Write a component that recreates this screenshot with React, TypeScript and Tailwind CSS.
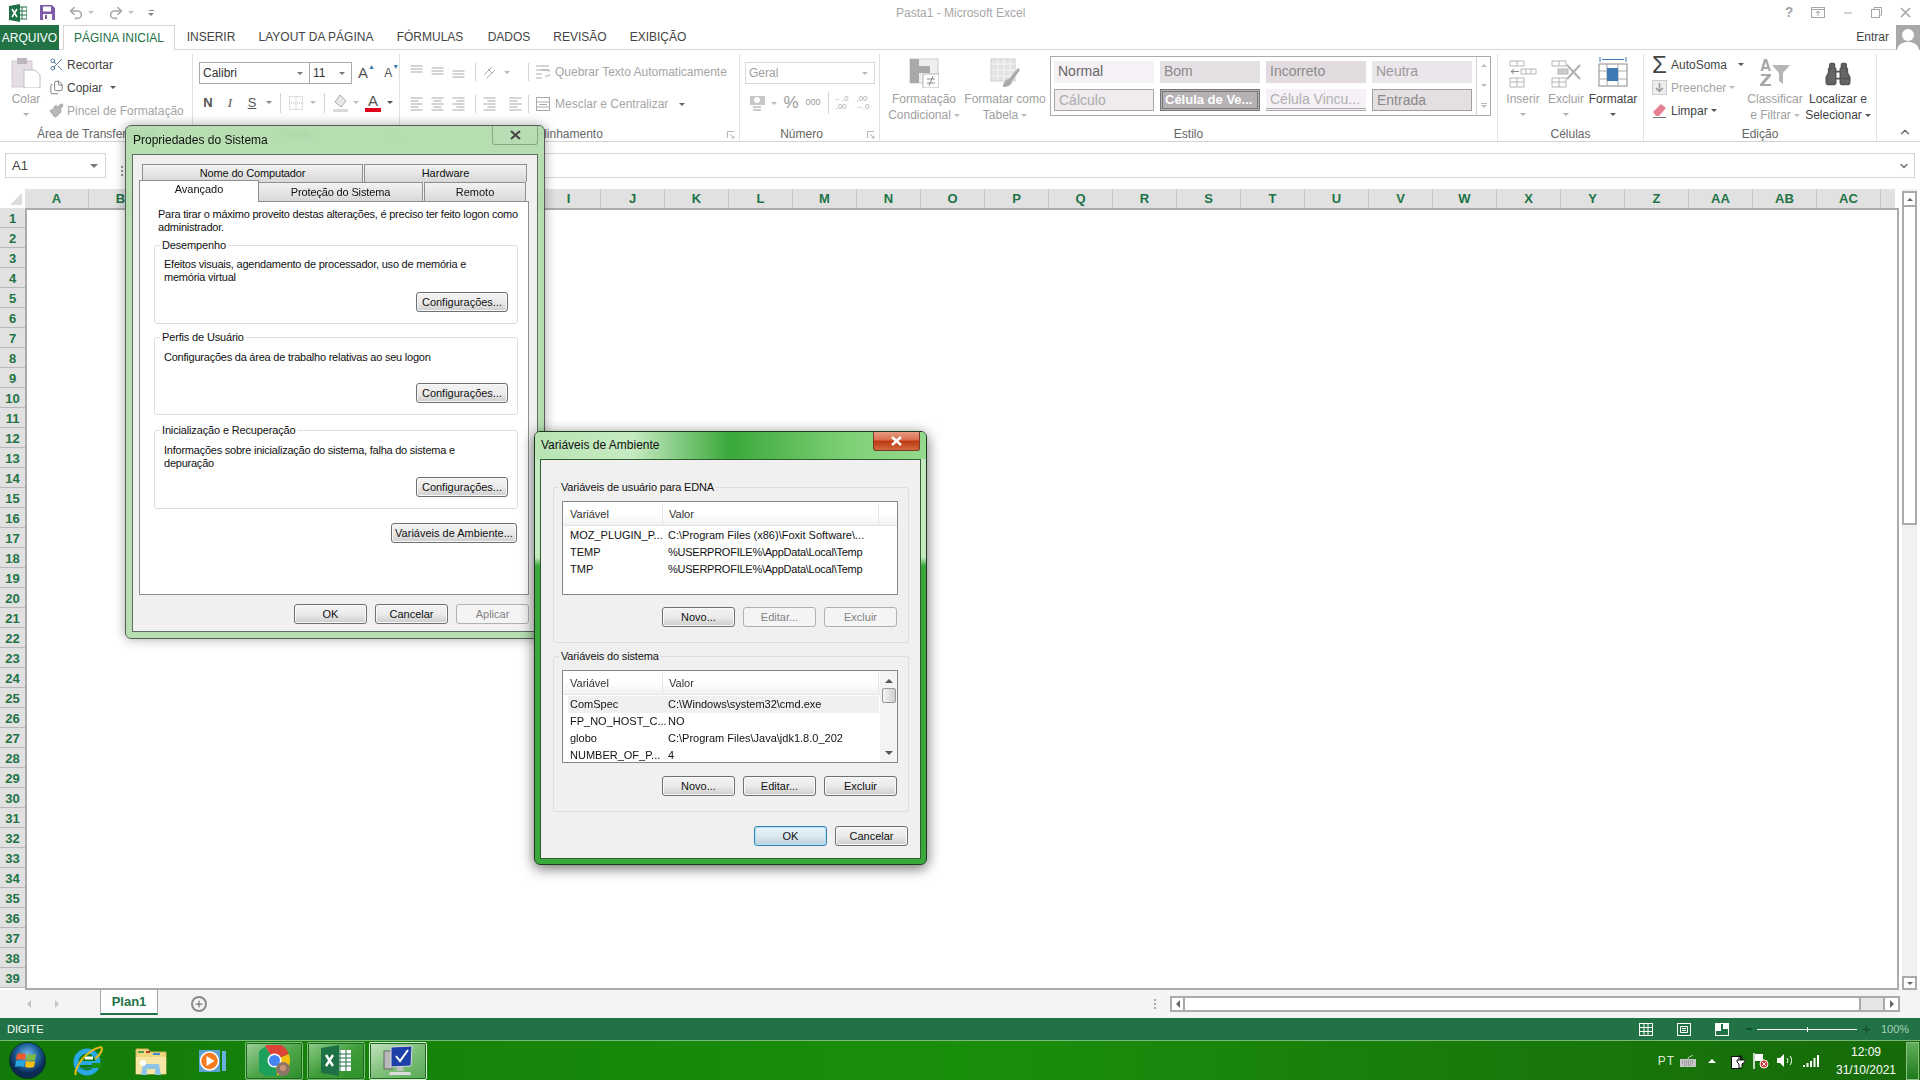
import React from "react";
import { Scissors, Files, Paintbrush, Undo2, Redo2, Binoculars, ChevronUp, ChevronDown, Plus, Minus } from "lucide-react";

const Caret = ({ c = "border-t-[#8a8a8a]", className = "" }: { c?: string; className?: string }) => (
  <span className={"inline-block w-0 h-0 border-x-[3px] border-t-[3px] border-x-transparent " + c + " " + className} />
);

const Sep = ({ className = "h-[24px]" }: { className?: string }) => <span className={"inline-block w-px bg-[#d4d4d4] " + className} />;

const Lines = ({ kind = "left", c = "#a9a9a9" }: { kind?: string; c?: string }) => {
  const sets: Record<string, number[][]> = {
    top: [[1, 1, 13], [1, 4, 13], [1, 7, 13]],
    mid: [[1, 3, 13], [1, 6, 13], [1, 9, 13]],
    bot: [[1, 6, 13], [1, 9, 13], [1, 12, 13]],
    left: [[1, 1, 13], [1, 4, 9], [1, 7, 13], [1, 10, 9], [1, 13, 13]],
    center: [[1, 1, 13], [3, 4, 11], [1, 7, 13], [3, 10, 11], [1, 13, 13]],
    right: [[1, 1, 13], [5, 4, 13], [1, 7, 13], [5, 10, 13], [1, 13, 13]],
  };
  return (
    <svg width="15" height="14" viewBox="0 0 14 14">
      {sets[kind].map((l, i) => (
        <line key={i} x1={l[0]} x2={l[2]} y1={l[1]} y2={l[1]} stroke={c} strokeWidth="1" />
      ))}
    </svg>
  );
};

const Large = ({ icon, lines, cls, caret, dark }: { icon: React.ReactNode; lines: React.ReactNode[]; cls: string; caret?: boolean; dark?: boolean }) => (
  <div className={"flex flex-col items-center shrink-0 " + cls}>
    <div className="h-[37px] pb-[3px] flex items-end justify-center">{icon}</div>
    {lines.map((l, i) => (
      <div key={i} className={"h-[16px] leading-[16px] whitespace-nowrap flex items-center gap-[3px] text-[12px] " + (dark ? "text-[#444]" : "text-[#a0a0a0]")}>
        {l}
      </div>
    ))}
    {caret && <Caret c={dark ? "border-t-[#555]" : "border-t-[#b0b0b0]"} className="mt-[6px]" />}
  </div>
);

const Small = ({ icon, text, dark, caret, cls = "" }: { icon: React.ReactNode; text: string; dark?: boolean; caret?: React.ReactNode; cls?: string }) => (
  <div className={"h-[23px] flex items-center whitespace-nowrap text-[12px] " + (dark ? "text-[#444] " : "text-[#a6a6a6] ") + cls}>
    {icon}
    <span>{text}</span>
    {caret}
  </div>
);

const Launcher = () => (
  <svg className="absolute right-[4px] top-[8px]" width="8" height="8" viewBox="0 0 8 8" fill="none" stroke="#b5b5b5">
    <path d="M.5 7V.5H7M3 3l4 4M7 4.5V7H4.5" />
  </svg>
);

const Group = ({ cls, label, launcher, labelCls = "", children }: { cls: string; label?: string; launcher?: boolean; labelCls?: string; children: React.ReactNode }) => (
  <div className={"flex flex-col shrink-0 h-full " + cls}>
    <div className="flex-1 min-h-0">{children}</div>
    <div className={"relative h-[18px] leading-[22px] text-center text-[12px] text-[#666] " + labelCls}>
      {label}
      {launcher && <Launcher />}
    </div>
  </div>
);

const IconCell = ({ w, children }: { w: string; children: React.ReactNode }) => <span className={"shrink-0 flex items-center justify-center " + w}>{children}</span>;

const Combo = ({ text, cls, dis }: { text: string; cls: string; dis?: boolean }) => (
  <div className={"h-[22px] flex items-center justify-between px-[3px] border text-[12px] shrink-0 " + (dis ? "border-[#d9d9d9] text-[#a0a0a0] " : "border-[#ababab] text-[#333] ") + cls}>
    <span>{text}</span>
    <Caret className="mr-[3px]" c={dis ? "border-t-[#bbb]" : "border-t-[#777]"} />
  </div>
);

const Ribbon = () => {
  const styleItem = "w-[100px] h-[22px] leading-[20px] px-[4px] text-[14px] whitespace-nowrap overflow-hidden ";
  return (
    <div className="h-[92px] shrink-0 flex border-b border-[#d4d4d4] bg-white text-[#444] pt-[4px]">
      <Group cls="w-[193px] border-r border-[#e1e1e1]" label="Área de Transferência" launcher>
        <div className="flex pl-[11px]">
          <Large
            cls="w-[30px]"
            lines={["Colar"]}
            caret
            icon={
              <svg width="30" height="30" viewBox="0 0 30 30">
                <rect x="1" y="3" width="20" height="26" fill="#e4dee4" stroke="#cfc8cf" />
                <rect x="6" y="0" width="10" height="6" fill="#bdb6bd" />
                <path d="M13 12h11l5 5v13H13z" fill="#fff" stroke="#bdbdbd" />
              </svg>
            }
          />
          <div className="ml-[8px] -mt-[1px] flex flex-col">
            <Small dark text="Recortar" icon={<Scissors size={15} className="mr-[3px] text-[#4a6f9c]" strokeWidth={1.5} />} />
            <Small dark text="Copiar" icon={<Files size={15} className="mr-[3px] text-[#666]" strokeWidth={1.3} />} caret={<Caret className="ml-[8px]" c="border-t-[#555]" />} />
            <Small text="Pincel de Formatação" icon={<Paintbrush size={15} className="mr-[3px] text-[#aaa]" fill="#bbb" />} />
          </div>
        </div>
      </Group>

      <Group cls="w-[207px] border-r border-[#e1e1e1]" label="Fonte" launcher>
        <div className="pt-[8px] pl-[6px]">
          <div className="flex items-center">
            <Combo text="Calibri" cls="w-[111px] -mr-px" />
            <Combo text="11" cls="w-[43px]" />
            <span className="w-[30px] pl-[6px] text-[15px] text-[#555] relative">A<span className="absolute left-[16px] top-0 text-[7px] text-[#3d7ab5]">▲</span></span>
            <span className="w-[20px] pl-[4px] text-[12px] text-[#555] relative">A<span className="absolute left-[12px] -top-[2px] text-[7px] text-[#3d7ab5]">▼</span></span>
          </div>
          <div className="flex items-center h-[22px] mt-[7px] -ml-[2px]">
            <IconCell w="w-[22px]"><b className="text-[13px] text-[#555]">N</b></IconCell>
            <IconCell w="w-[22px]"><i className="text-[13px] text-[#555] [font-family:'Liberation_Serif',serif]">I</i></IconCell>
            <IconCell w="w-[22px]"><b className="text-[13px] text-[#555] underline font-normal">S</b></IconCell>
            <IconCell w="w-[12px]"><Caret /></IconCell>
            <IconCell w="w-[10px]"><Sep className="h-[20px]" /></IconCell>
            <IconCell w="w-[22px]">
              <svg width="14" height="14" viewBox="0 0 14 14" fill="none" stroke="#bdbdbd" strokeDasharray="1 1"><rect x=".5" y=".5" width="13" height="13" /><path d="M7 0v14M0 7h14" /></svg>
            </IconCell>
            <IconCell w="w-[12px]"><Caret c="border-t-[#bbb]" /></IconCell>
            <IconCell w="w-[10px]"><Sep className="h-[20px]" /></IconCell>
            <IconCell w="w-[24px]">
              <svg width="18" height="18" viewBox="0 0 18 18"><path d="M8 1l6 6-5 6-6-5z" fill="#e8e8e8" stroke="#aaa" /><rect x="1" y="15" width="15" height="3" fill="#d9d9d9" /></svg>
            </IconCell>
            <IconCell w="w-[6px]"><Caret c="border-t-[#bbb]" /></IconCell>
            <IconCell w="w-[28px]">
              <span className="flex flex-col items-center text-[15px] leading-[15px] text-[#555]">A<span className="block w-[16px] h-[4px] bg-[#e2001a]" /></span>
            </IconCell>
            <IconCell w="w-[6px]"><Caret c="border-t-[#555]" /></IconCell>
          </div>
        </div>
      </Group>

      <Group cls="w-[340px] border-r border-[#e1e1e1]" label="Alinhamento" launcher>
        <div className="pt-[6px] pl-[6px] text-[#a6a6a6] text-[12px]">
          <div className="flex items-center h-[24px]">
            <IconCell w="w-[21px]"><Lines kind="top" /></IconCell>
            <IconCell w="w-[21px]"><Lines kind="mid" /></IconCell>
            <IconCell w="w-[21px]"><Lines kind="bot" /></IconCell>
            <span className="w-[6px]" />
            <Sep className="h-[18px]" />
            <IconCell w="w-[28px]">
              <svg width="16" height="15" viewBox="0 0 16 15" fill="none" stroke="#aaa"><path d="M2 10L10 2M5 13L13 5" /><path d="M6 4l4 4" /></svg>
            </IconCell>
            <Caret c="border-t-[#bbb]" />
            <span className="w-[18px]" />
            <Sep className="h-[18px]" />
            <svg className="ml-[7px] mr-[5px]" width="14" height="14" viewBox="0 0 14 14" fill="none" stroke="#aaa"><path d="M0 1h13M0 5h13M0 9h6M0 13h6M9 11h2.5a1.5 1.5 0 000-6H5" /></svg>
            <span>Quebrar Texto Automaticamente</span>
          </div>
          <div className="flex items-center h-[24px] mt-[8px]">
            <IconCell w="w-[21px]"><Lines kind="left" /></IconCell>
            <IconCell w="w-[21px]"><Lines kind="center" /></IconCell>
            <IconCell w="w-[21px]"><Lines kind="right" /></IconCell>
            <span className="w-[6px]" />
            <Sep className="h-[18px]" />
            <IconCell w="w-[26px]"><Lines kind="right" /></IconCell>
            <IconCell w="w-[26px]"><Lines kind="left" /></IconCell>
            <Sep className="h-[18px]" />
            <svg className="ml-[7px] mr-[5px]" width="14" height="14" viewBox="0 0 14 14" fill="none" stroke="#aaa"><rect x=".5" y=".5" width="13" height="13" /><path d="M0 5h14M0 10h14M3 7.5h8" /></svg>
            <span>Mesclar e Centralizar</span>
            <Caret className="ml-[11px]" c="border-t-[#666]" />
          </div>
        </div>
      </Group>

      <Group cls="w-[140px] border-r border-[#e1e1e1]" label="Número" launcher labelCls="pr-[16px]">
        <div className="pt-[8px] pl-[5px]">
          <Combo dis text="Geral" cls="w-[130px]" />
          <div className="flex items-center h-[24px] mt-[7px] text-[#aaa]">
            <IconCell w="w-[26px]">
              <svg width="18" height="18" viewBox="0 0 18 18"><rect x="1" y="2" width="15" height="9" fill="#c6c6c6" /><circle cx="8" cy="6" r="3" fill="#fff" /><path d="M4 13h8M4 16h8" stroke="#ccc" strokeWidth="2" /></svg>
            </IconCell>
            <Caret c="border-t-[#bbb]" />
            <span className="w-[3px]" />
            <span className="text-[17px] w-[22px] text-center text-[#999]">%</span>
            <span className="text-[9px] w-[22px] text-center text-[#999]">000</span>
            <span className="w-[4px]" />
            <Sep className="h-[22px]" />
            <span className="w-[24px] text-[8px] leading-[8px] text-center">←,0<br />,00</span>
            <span className="w-[18px] text-[8px] leading-[8px] text-center">,00<br />→,0</span>
          </div>
        </div>
      </Group>

      <Group cls="w-[618px] border-r border-[#e1e1e1]" label="Estilo">
        <div className="flex pl-[2px]">
          <Large
            cls="w-[84px]"
            lines={["Formatação", <>Condicional <Caret c="border-t-[#bbb]" /></>]}
            icon={
              <svg width="30" height="30" viewBox="0 0 30 30">
                <rect x="1" y="1" width="28" height="24" fill="#eee" stroke="#ccc" />
                <path d="M1 1h9v24H1zM10 8h11v7H10z" fill="#a9a9a9" />
                <rect x="14" y="16" width="16" height="14" fill="#fff" stroke="#b5b5b5" />
                <path d="M18 21h8M18 25h8M24 18l-4 10" stroke="#888" fill="none" />
              </svg>
            }
          />
          <Large
            cls="w-[78px]"
            lines={["Formatar como", <>Tabela <Caret c="border-t-[#bbb]" /></>]}
            icon={
              <svg width="32" height="30" viewBox="0 0 32 30">
                <rect x="2" y="1" width="24" height="22" fill="#e3e3e3" stroke="#ccc" />
                <path d="M2 6h24M2 12h24M2 18h24M9 1v22M15 1v22M21 1v22" stroke="#f5f5f5" />
                <path d="M14 29c0-5 3-8 6-8l9-11 2 2-8 11c0 4-4 6-9 6z" fill="#aaa" />
              </svg>
            }
          />
          <div className="ml-[6px] mt-[2px] w-[441px] h-[60px] border border-[#ababab] flex">
            <div className="flex-1 pl-[3px] pt-[4px] grid grid-cols-[100px_100px_100px_100px] gap-x-[6px] gap-y-[6px] content-start">
              <div className={styleItem + "bg-[#f5f1f6] text-[#666]"}>Normal</div>
              <div className={styleItem + "bg-[#e5e0e4] text-[#8a8a8a]"}>Bom</div>
              <div className={styleItem + "bg-[#e2dce0] text-[#8a8a8a]"}>Incorreto</div>
              <div className={styleItem + "bg-[#ebe6eb] text-[#9a9a9a]"}>Neutra</div>
              <div className={styleItem + "bg-[#efebef] border border-[#a8a8a8] text-[#aaa]"}>Cálculo</div>
              <div className="w-[100px] h-[22px] leading-[16px] px-[2px] text-[13px] whitespace-nowrap overflow-hidden bg-[#b5b1b5] border-[3px] border-double border-[#777] text-white font-bold">Célula de Ve...</div>
              <div className={styleItem + "bg-[#f5f1f6] border-b-[3px] border-double border-[#aaa] text-[#b0b0b0]"}>Célula Vincu...</div>
              <div className={styleItem + "bg-[#e3dfe3] border border-[#a0a0a0] text-[#8a8a8a]"}>Entrada</div>
            </div>
            <div className="w-[14px] border-l border-[#d4d4d4] flex flex-col items-center justify-between py-[7px]">
              <Caret className="rotate-180" c="border-t-[#bbb]" />
              <Caret c="border-t-[#bbb]" />
              <span className="flex flex-col items-center gap-[1px]"><span className="w-[6px] h-px bg-[#bbb]" /><Caret c="border-t-[#bbb]" /></span>
            </div>
          </div>
        </div>
      </Group>

      <Group cls="w-[146px] border-r border-[#e1e1e1]" label="Células">
        <div className="flex pl-[3px]">
          <Large
            cls="w-[44px]"
            lines={["Inserir"]}
            caret
            icon={
              <svg width="28" height="28" viewBox="0 0 28 28" fill="none" stroke="#b5b5b5">
                <path d="M1 1h14v5H1zM8 1v5M1 18h14v9H1zM1 22h14M8 18v9M12 9h15v5H12zM17 9v5M22 9v5" />
                <path d="M10 11.5H2M5 9l-3 2.5L5 14" stroke="#888" />
              </svg>
            }
          />
          <Large
            cls="w-[42px]"
            lines={["Excluir"]}
            caret
            icon={
              <svg width="30" height="28" viewBox="0 0 30 28" fill="none" stroke="#b5b5b5">
                <path d="M1 1h14v5H1zM8 1v5M1 18h14v9H1zM1 22h14M8 18v9" />
                <rect x="7" y="9" width="10" height="5" fill="#ccc" />
                <path d="M16 5l13 14M29 5L16 19" stroke="#b0b0b0" strokeWidth="2" />
              </svg>
            }
          />
          <Large
            dark
            cls="w-[52px]"
            lines={["Formatar"]}
            caret
            icon={
              <svg width="30" height="32" viewBox="0 0 30 32" fill="none">
                <path d="M2 1v5M28 1v5M4 3.5h22" stroke="#3d7ab5" />
                <rect x="1" y="8" width="28" height="22" fill="#fff" stroke="#888" />
                <path d="M1 15h28M1 23h28M9 8v22M20 8v22" stroke="#aaa" />
                <rect x="9" y="12" width="11" height="13" fill="#3d7ab5" />
              </svg>
            }
          />
        </div>
      </Group>

      <Group cls="w-[233px] border-r border-[#e1e1e1]" label="Edição">
        <div className="flex pl-[8px]">
          <div className="w-[95px] shrink-0 -mt-[1px]">
            <Small dark text="AutoSoma" icon={<span className="w-[19px] text-[24px] leading-[18px] text-[#444]">Σ</span>} caret={<Caret className="ml-[11px]" c="border-t-[#555]" />} />
            <Small
              text="Preencher"
              icon={
                <svg className="mr-[4px]" width="15" height="15" viewBox="0 0 15 15"><rect x=".5" y=".5" width="14" height="14" fill="#eee" stroke="#ccc" /><path d="M7.5 3v8M4 8l3.5 3.5L11 8" stroke="#999" fill="none" strokeWidth="1.5" /></svg>
              }
              caret={<Caret className="ml-[3px]" c="border-t-[#bbb]" />}
            />
            <Small
              dark
              text="Limpar"
              icon={
                <svg className="mr-[4px]" width="15" height="15" viewBox="0 0 15 15"><path d="M1 9l8-8 5 4-7 8H4z" fill="#e8808f" /><path d="M1 14.5h13" stroke="#777" /></svg>
              }
              caret={<Caret className="ml-[3px]" c="border-t-[#555]" />}
            />
          </div>
          <Large
            cls="w-[56px]"
            lines={["Classificar", <>e Filtrar <Caret c="border-t-[#bbb]" /></>]}
            icon={
              <svg width="32" height="30" viewBox="0 0 32 30" fill="#a8a8a8">
                <path d="M5 1h3l4 12H9.6L9 11H4.5L4 13H1.5zM6.8 4L5.2 9h3z" />
                <path d="M2 16h10v2l-7 8h7v2H1v-2l7-8H2z" />
                <path d="M13 7h18l-7 8v11l-4-3v-8z" fill="#b5b5b5" />
              </svg>
            }
          />
          <Large
            dark
            cls="w-[70px]"
            lines={["Localizar e", <>Selecionar <Caret c="border-t-[#555]" /></>]}
            icon={<Binoculars size={28} className="text-[#555]" fill="#666" strokeWidth={1.4} />}
          />
        </div>
      </Group>

      <div className="flex-1 relative">
        <ChevronUp size={14} className="absolute right-[8px] bottom-[2px] text-[#666]" strokeWidth={2} />
      </div>
    </div>
  );
};

const TitleBar = () => (
  <div className="h-[25px] shrink-0 flex items-center bg-white relative">
    <svg className="ml-[9px]" width="18" height="18" viewBox="0 0 18 18">
      <rect x="8" y="3" width="10" height="12" fill="#fff" stroke="#1e7145" />
      <path d="M8 7h10M8 11h10M13 3v12" stroke="#1e7145" />
      <path d="M0 2l11-2v18L0 16z" fill="#1e7145" />
      <path d="M3 5l5 8M8 5l-5 8" stroke="#fff" strokeWidth="1.6" />
    </svg>
    <svg className="ml-[13px]" width="15" height="15" viewBox="0 0 15 15">
      <path d="M0 0h12l3 3v12H0z" fill="#7f5aa5" />
      <rect x="3" y="1.5" width="8" height="5" fill="#fff" />
      <rect x="3" y="9" width="9" height="6" fill="#fff" />
      <rect x="5" y="10" width="2" height="4" fill="#7f5aa5" />
    </svg>
    <Undo2 size={16} className="ml-[13px] text-[#a9a9a9]" strokeWidth={2.4} />
    <Caret className="ml-[4px]" c="border-t-[#c4c4c4]" />
    <Redo2 size={16} className="ml-[14px] text-[#a9a9a9]" strokeWidth={2.4} />
    <Caret className="ml-[4px]" c="border-t-[#c4c4c4]" />
    <span className="ml-[14px] flex flex-col items-center gap-[2px]"><span className="w-[5px] h-px bg-[#888]" /><Caret c="border-t-[#888]" /></span>
    <div className="absolute left-[896px] w-[126px] text-center text-[12px] text-[#a6a6a6] whitespace-nowrap">Pasta1 - Microsoft Excel</div>
    <div className="ml-auto flex items-center text-[#a6a6a6]">
      <span className="w-[14px] text-center text-[14px] font-bold mr-[15px]">?</span>
      <svg className="mr-[17px]" width="14" height="11" viewBox="0 0 14 11" fill="none" stroke="#a6a6a6"><rect x=".5" y=".5" width="13" height="10" /><path d="M1 2.5h12M7 9V4M5 6l2-2 2 2" /></svg>
      <Minus size={12} className="mr-[17px]" strokeWidth={2} />
      <svg className="mr-[18px]" width="11" height="11" viewBox="0 0 11 11" fill="none" stroke="#a6a6a6"><rect x=".5" y="2.5" width="8" height="8" /><path d="M3 2V.5h7.5V8H9" /></svg>
      <svg className="mr-[9px]" width="11" height="11" viewBox="0 0 11 11" stroke="#a6a6a6" strokeWidth="1.6"><path d="M1 1l9 9M10 1l-9 9" /></svg>
    </div>
  </div>
);

const Tabs = () => (
  <div className="h-[25px] shrink-0 flex items-stretch border-b border-[#d4d4d4] text-[12px] text-[#444] bg-white relative">
    <div className="w-[59px] bg-[#217346] text-white flex items-center justify-center -mb-px">ARQUIVO</div>
    <div className="ml-[4px] w-[112px] border border-b-0 border-[#d4d4d4] bg-white -mb-px flex items-center justify-center text-[#217346]">PÁGINA INICIAL</div>
    <div className="w-[72px] flex items-center justify-center">INSERIR</div>
    <div className="w-[138px] flex items-center justify-center">LAYOUT DA PÁGINA</div>
    <div className="w-[90px] flex items-center justify-center">FÓRMULAS</div>
    <div className="w-[68px] flex items-center justify-center">DADOS</div>
    <div className="w-[74px] flex items-center justify-center">REVISÃO</div>
    <div className="w-[82px] flex items-center justify-center">EXIBIÇÃO</div>
    <div className="ml-auto flex items-center">
      <span className="mr-[7px]">Entrar</span>
      <span className="w-[24px] h-[25px] bg-[#a9a9a9] relative overflow-hidden flex justify-center">
        <svg width="24" height="25" viewBox="0 0 24 25"><circle cx="12" cy="10" r="6" fill="#fff" /><path d="M1 25c1-6 6-8 11-8s10 2 11 8z" fill="#fff" /></svg>
      </span>
    </div>
  </div>
);

const FormulaBar = () => (
  <div className="h-[47px] shrink-0 pt-[11px] flex bg-white text-[12px]">
    <div className="ml-[5px] w-[101px] h-[25px] border border-[#d4d4d4] flex items-center justify-between pl-[6px] pr-[7px] text-[#444]">
      <span className="text-[13px]">A1</span>
      <Caret className="border-x-[4px] border-t-[4px]" c="border-t-[#777]" />
    </div>
    <div className="ml-[10px] w-[12px] flex flex-col items-center justify-center gap-[2px]">
      <span className="w-[2px] h-[2px] bg-[#999]" /><span className="w-[2px] h-[2px] bg-[#999]" /><span className="w-[2px] h-[2px] bg-[#999]" />
    </div>
    <div className="flex-1 mr-[5px] h-[25px] border border-[#d4d4d4] flex items-center justify-end pr-[4px]">
      <ChevronDown size={12} strokeWidth={3} className="text-[#777]" />
    </div>
  </div>
);

const COLS = "A B C D E F G H I J K L M N O P Q R S T U V W X Y Z AA AB AC".split(" ");
const ROWS = Array.from({ length: 39 }, (_, i) => i + 1);

const Sheet = () => (
  <div className="h-[801px] shrink-0 flex bg-white">
    <div className="w-[1899px] flex flex-col">
      <div className="h-[19px] flex shrink-0">
        <div className="w-[25px] bg-white relative overflow-hidden">
          <svg className="absolute right-[3px] bottom-[3px]" width="12" height="12"><path d="M12 0v12H0z" fill="#dcdcdc" /></svg>
        </div>
        {COLS.map((c) => (
          <div key={c} className="w-[64px] bg-[#e1e1e1] border-r border-[#c6c6c6] flex items-center justify-center text-[13px] font-bold text-[#217346]">{c}</div>
        ))}
        <div className="w-[14px] bg-[#e1e1e1]" />
      </div>
      <div className="flex flex-1 min-h-0">
        <div className="w-[25px] shrink-0 flex flex-col">
          {ROWS.map((r) => (
            <div key={r} className="h-[20px] shrink-0 pt-[2px] bg-[#e1e1e1] border-b border-[#b8b8b8] flex items-center justify-center text-[13px] font-bold text-[#217346]">{r}</div>
          ))}
        </div>
        <div className="flex-1 h-[782px] border-2 border-[#ababab] bg-white" />
      </div>
    </div>
    <div className="ml-[3px] w-[15px] flex flex-col bg-[#f1f1f1] h-[801px] pt-[2px]">
      <div className="h-[16px] border-2 border-[#ababab] bg-white flex items-center justify-center">
        <Caret className="rotate-180" c="border-t-[#666]" />
      </div>
      <div className="h-[318px] border-2 border-t-0 border-[#ababab] bg-white" />
      <div className="flex-1" />
      <div className="h-[14px] border-2 border-[#ababab] bg-white flex items-center justify-center">
        <Caret c="border-t-[#666]" />
      </div>
    </div>
  </div>
);

const SheetBar = () => (
  <div className="h-[28px] shrink-0 flex items-center bg-[#f4f4f4] relative">
    <span className="ml-[27px] w-0 h-0 border-y-[4px] border-r-[4px] border-y-transparent border-r-[#c4c4c4]" />
    <span className="ml-[24px] w-0 h-0 border-y-[4px] border-l-[4px] border-y-transparent border-l-[#c4c4c4]" />
    <div className="ml-[41px] w-[58px] h-[25px] -mt-[3px] border-x border-[#ababab] bg-white border-b-2 border-b-[#217346] flex items-center justify-center text-[13px] font-bold text-[#217346]">Plan1</div>
    <span className="ml-[33px] w-[16px] h-[16px] rounded-full border-2 border-[#8a8a8a] flex items-center justify-center text-[#777]">
      <Plus size={10} strokeWidth={3} />
    </span>
    <div className="ml-[944px] flex flex-col gap-[2px] w-[8px] items-center">
      <span className="w-[2px] h-[2px] bg-[#aaa]" /><span className="w-[2px] h-[2px] bg-[#aaa]" /><span className="w-[2px] h-[2px] bg-[#aaa]" />
    </div>
    <div className="ml-[11px] w-[730px] h-[16px] flex border-2 border-[#ababab] bg-white">
      <div className="w-[13px] border-r-2 border-[#ababab] flex items-center justify-center">
        <span className="w-0 h-0 border-y-[4px] border-r-[4px] border-y-transparent border-r-[#666]" />
      </div>
      <div className="w-[676px] bg-white border-r-2 border-[#ababab]" />
      <div className="flex-1 bg-[#e6e6e6] border-r-2 border-[#ababab]" />
      <div className="w-[13px] flex items-center justify-center">
        <span className="w-0 h-0 border-y-[4px] border-l-[4px] border-y-transparent border-l-[#666]" />
      </div>
    </div>
  </div>
);

const StatusBar = () => (
  <div className="h-[22px] shrink-0 bg-[#217346] flex items-center text-[11px] text-white">
    <span className="ml-[7px]">DIGITE</span>
    <div className="ml-auto flex items-center">
      <svg width="14" height="13" viewBox="0 0 14 13" fill="none" stroke="#fff"><rect x=".5" y=".5" width="13" height="12" /><path d="M5 0v13M9 0v13M0 4.5h14M0 8.5h14" /></svg>
      <svg className="ml-[24px]" width="14" height="13" viewBox="0 0 14 13" fill="none" stroke="#fff"><rect x=".5" y=".5" width="13" height="12" /><path d="M3.5 3.5h7v6h-7zM5 5.5h4M5 7.5h4" /></svg>
      <svg className="ml-[24px]" width="14" height="13" viewBox="0 0 14 13"><rect x=".5" y=".5" width="13" height="12" fill="none" stroke="#fff" /><path d="M0 0h6v8H0zM8 0h6v6H8z" fill="#fff" /></svg>
      <span className="ml-[17px] w-[6px] h-[2px] bg-[#14502e]" />
      <span className="ml-[5px] w-[100px] h-px bg-white relative"><span className="absolute left-1/2 -top-[2px] w-px h-[5px] bg-white" /></span>
      <Plus size={11} strokeWidth={3} className="ml-[4px] text-[#14502e]" />
      <span className="ml-[9px] mr-[9px] w-[30px] text-[#a8cdb6] text-[11px]">100%</span>
    </div>
  </div>
);

const TaskBtn = ({ cls, children }: { cls: string; children: React.ReactNode }) => (
  <div className={"w-[58px] h-[38px] rounded-[2px] border border-[#7fbd7f] flex items-center justify-center shrink-0 shadow-[inset_0_0_0_1px_#1c6a1c] " + cls}>{children}</div>
);

const Taskbar = () => (
  <div className="flex-1 border-t border-[#78b878] bg-gradient-to-r from-[#127a08] via-[#1a8f0c] to-[#166a08] flex items-center text-white relative">
    <svg className="ml-[9px] shrink-0" width="37" height="37" viewBox="0 0 37 37">
      <defs>
        <radialGradient id="orb" cx="50%" cy="35%"><stop offset="0" stopColor="#7ec1ee" /><stop offset="0.6" stopColor="#20649f" /><stop offset="1" stopColor="#0b2b55" /></radialGradient>
      </defs>
      <circle cx="18.5" cy="18.5" r="18" fill="url(#orb)" stroke="#0a3a22" />
      <path d="M8 12c3-1 6-1 9 0l-1 6c-3-1-6-1-9 0z" fill="#f15b2a" />
      <path d="M18 12c3 1 6 1 9 0l-1 6c-3 1-6 1-9 0z" fill="#7cbb42" />
      <path d="M7 19c3-1 6-1 9 0l-1 6c-3-1-6-1-9 0z" fill="#2aa5e0" />
      <path d="M17 19c3 1 6 1 9 0l-1 6c-3 1-6 1-9 0z" fill="#fbc00e" />
    </svg>
    <svg className="ml-[27px] shrink-0" width="30" height="30" viewBox="0 0 30 30">
      <circle cx="14" cy="16" r="11" fill="none" stroke="#29a7e6" strokeWidth="5" />
      <path d="M6 17h17" stroke="#29a7e6" strokeWidth="4" />
      <path d="M12 12h8" stroke="#fff" strokeWidth="3" />
      <path d="M3 29C0 24 12 4 28 1c3 2-2 9-6 12" fill="none" stroke="#e9b818" strokeWidth="2" />
      <path d="M22 21l-16 2" stroke="#18a" strokeWidth="1" />
      <rect x="19" y="17" width="9" height="5" fill="#1a8f0c" />
    </svg>
    <svg className="ml-[32px] shrink-0" width="32" height="30" viewBox="0 0 32 30">
      <path d="M1 3h12l2 3h16v22H1z" fill="#f1d77b" stroke="#d2b15a" />
      <path d="M3 5h6v2H3z" fill="#4ea04e" /><path d="M11 5h4v2h-4z" fill="#c33" /><path d="M18 7h7v2h-7z" fill="#3d8bd4" />
      <path d="M1 11h30v17H1z" fill="#f7e7a6" />
      <path d="M8 18h16l2 11H20v-6h-8v6H6z" fill="#8ec4e8" />
      <circle cx="8" cy="17" r="3" fill="#fff" />
    </svg>
    <svg className="ml-[32px] shrink-0" width="27" height="26" viewBox="0 0 27 26">
      <path d="M0 2h21v22H0z" fill="#5aa0d0" />
      <path d="M23 3h4v20h-4z" fill="#6ab0dc" />
      <circle cx="10.5" cy="13" r="9" fill="#f47b20" stroke="#fff" strokeWidth="1.5" />
      <path d="M7.5 8l8 5-8 5z" fill="#fff" />
    </svg>
    <div className="ml-[19px] flex gap-[4px]">
      <TaskBtn cls="bg-gradient-to-br from-[#9ed09a] via-[#4fa64a] to-[#2c8e2a]">
        <svg width="31" height="31" viewBox="0 0 31 31">
          <path d="M15.5 15.5L6 1A15 15 0 0129.5 9z" fill="#db4437" />
          <path d="M15.5 15.5L29.5 9A15 15 0 0118 30.5z" fill="#f4c20d" />
          <path d="M15.5 15.5L18 30.5A15 15 0 016 2z" fill="#1da05b" />
          <circle cx="15.5" cy="15.5" r="7" fill="#fff" />
          <circle cx="15.5" cy="15.5" r="5.5" fill="#4285f4" />
          <circle cx="24" cy="24" r="7" fill="#8c7468" />
          <circle cx="24" cy="23" r="3" fill="#c99476" />
        </svg>
      </TaskBtn>
      <TaskBtn cls="bg-gradient-to-br from-[#8ecb88] via-[#3f9e3a] to-[#2c8e2a]">
        <svg width="30" height="31" viewBox="0 0 30 31">
          <rect x="12" y="5" width="18" height="21" fill="#fff" />
          <path d="M19 5v21M25 5v21M12 9h18M12 13h18M12 17h18M12 21h18" stroke="#1e7145" strokeWidth="1" />
          <path d="M0 3l18-3v31L0 28z" fill="#1e7145" />
          <path d="M5 10l7 11M12 10L5 21" stroke="#fff" strokeWidth="2.4" />
        </svg>
      </TaskBtn>
      <TaskBtn cls="bg-gradient-to-br from-[#c6e4c2] via-[#7ec07a] to-[#5ba957] border-[#d6eed3]">
        <svg width="33" height="31" viewBox="0 0 33 31">
          <rect x="2" y="6" width="8" height="18" fill="#b9b9b9" stroke="#666" />
          <path d="M9 2l21-1-1 20-20 1z" fill="#1d3fa8" stroke="#dcdcdc" />
          <path d="M14 11l4 5 8-11" fill="none" stroke="#fff" strokeWidth="2" />
          <path d="M15 22h6l1 4H14z" fill="#bbb" /><path d="M8 27h20l1 3H7z" fill="#ddd" />
        </svg>
      </TaskBtn>
    </div>
    <div className="ml-auto flex items-center">
      <span className="text-[12px] tracking-[1px] text-[#dbe9d8]">PT</span>
      <svg className="ml-[5px]" width="16" height="14" viewBox="0 0 16 14"><path d="M0 5h16v8H0z" fill="#c7c7c7" /><path d="M2 7h12M2 9h12M4 11h8" stroke="#777" strokeDasharray="1 1" /><path d="M8 5c0-3 3-2 5-4" stroke="#ccc" fill="none" /></svg>
      <span className="ml-[12px] w-0 h-0 border-x-[4px] border-b-[4px] border-x-transparent border-b-white" />
      <svg className="ml-[15px]" width="15" height="16" viewBox="0 0 15 16"><rect x=".5" y="3.5" width="9" height="12" fill="#fff" stroke="#111" /><path d="M6 7h8v2l-3 2v4H8v-4L6 9zM8 7V2M11 7V2" stroke="#111" fill="#fff" /></svg>
      <svg className="ml-[7px]" width="16" height="16" viewBox="0 0 16 16"><path d="M1 0v16" stroke="#fff" strokeWidth="1.5" /><path d="M2 1h8v7H2z" fill="#fff" /><circle cx="11" cy="11" r="4" fill="#d32f2f" stroke="#fff" /><path d="M9 9l4 4M13 9l-4 4" stroke="#fff" /></svg>
      <svg className="ml-[8px]" width="16" height="15" viewBox="0 0 16 15"><path d="M0 5h3l4-4v13l-4-4H0z" fill="#fff" /><path d="M10 5c1 1 1 4 0 5M13 3c2 2 2 7 0 9" stroke="#fff" fill="none" /></svg>
      <svg className="ml-[10px]" width="16" height="12" viewBox="0 0 16 12" fill="#fff"><path d="M0 10h2v2H0zM3.5 8h2v4h-2zM7 6h2v6H7zM10.5 3h2v9h-2zM14 0h2v12h-2z" /></svg>
      <div className="ml-[10px] w-[74px] text-center text-[12px] leading-[18px]">
        <div>12:09</div>
        <div>31/10/2021</div>
      </div>
      <div className="ml-[3px] w-[13px] h-[38px] border border-[#8cc088] bg-gradient-to-b from-[#5fae5a] to-[#1d7a18] mr-px" />
    </div>
  </div>
);

const WinBtn = ({ text, w, disabled, def }: { text: string; w: string; disabled?: boolean; def?: boolean }) => (
  <div
    className={
      "h-[20px] shrink-0 rounded-[3px] border flex items-center justify-center text-[11px] whitespace-nowrap " +
      w +
      (disabled
        ? " border-[#adb2b5] bg-[#f4f4f4] text-[#838383]"
        : def
          ? " border-[#3c7fb1] text-[#111] bg-gradient-to-b from-[#e8f3fa] via-[#dbe8f0] to-[#bcd0dc] shadow-[inset_0_0_0_1px_#a9e4f7]"
          : " border-[#707070] text-[#111] bg-gradient-to-b from-[#f3f3f3] via-[#ebebeb] to-[#cdcdcd] shadow-[inset_0_0_0_1px_#f8f8f8]")
    }
  >
    {text}
  </div>
);

const Box = ({ title, cls, bg = "bg-white", children }: { title: string; cls: string; bg?: string; children: React.ReactNode }) => (
  <div className={"border border-[#d5dfe5] rounded-[3px] flex flex-col " + cls}>
    <div className={"-mt-[7px] ml-[5px] w-fit px-[2px] leading-[13px] h-[13px] text-[11px] tracking-[-0.15px] text-[#111] whitespace-nowrap " + bg}>{title}</div>
    {children}
  </div>
);

const SysProps = () => (
  <div className="absolute left-[125px] top-[125px] w-[420px] h-[514px] rounded-[6px] border border-[#555f55] bg-[#aedaa8]/90 backdrop-blur-[2px] shadow-[0_0_12px_rgba(0,0,0,0.35)] flex flex-col [font-family:'Liberation_Sans',sans-serif] overflow-hidden">
    <div className="h-[28px] shrink-0 flex items-center pl-[7px] text-[12px] text-[#111] relative">
      <span>Propriedades do Sistema</span>
      <div className="absolute right-[6px] -top-px w-[46px] h-[20px] border border-t-0 border-[#8aa888] rounded-b-[3px] flex items-center justify-center bg-[#b8dcb3]">
        <svg width="11" height="10" viewBox="0 0 11 10" stroke="#444" strokeWidth="2"><path d="M1 1l9 8M10 1L1 9" /></svg>
      </div>
    </div>
    <div className="mx-[6px] w-[406px] h-[478px] border border-[#5f6f5f] bg-[#f0f0f0] flex flex-col pt-[9px] pl-[6px]">
      <div className="ml-[3px] flex h-[18px] text-[11px] leading-[13px] text-[#111]">
        <div className="w-[221px] border border-b-0 border-[#8e8f8f] bg-gradient-to-b from-[#f2f2f2] to-[#d8d8d8] flex items-center justify-center tracking-[-0.15px]">Nome do Computador</div>
        <div className="ml-px w-[163px] border border-b-0 border-[#8e8f8f] bg-gradient-to-b from-[#f2f2f2] to-[#d8d8d8] flex items-center justify-center">Hardware</div>
      </div>
      <div className="-mt-[2px] flex items-end h-[21px] text-[11px] leading-[13px] text-[#111] relative z-10">
        <div className="w-[120px] h-[22px] border border-b-0 border-[#8e8f8f] bg-white flex items-center justify-center pb-[5px] -mb-px">Avançado</div>
        <div className="w-[164px] h-[19px] border border-l-0 border-b-0 border-[#8e8f8f] bg-gradient-to-b from-[#f2f2f2] to-[#d8d8d8] flex items-center justify-center tracking-[-0.15px]">Proteção do Sistema</div>
        <div className="ml-px w-[102px] h-[19px] border border-b-0 border-[#8e8f8f] bg-gradient-to-b from-[#f2f2f2] to-[#d8d8d8] flex items-center justify-center">Remoto</div>
      </div>
      <div className="w-[390px] h-[394px] border border-[#8e8f8f] bg-white flex flex-col text-[11px] text-[#111]">
        <div className="ml-[18px] mt-[6px] w-[368px] leading-[13px] tracking-[-0.23px]">Para tirar o máximo proveito destas alterações, é preciso ter feito logon como administrador.</div>
        <Box title="Desempenho" cls="ml-[14px] mt-[11px] w-[364px] h-[79px]">
          <div className="ml-[9px] mt-[6px] w-[340px] leading-[13px] tracking-[-0.23px]">Efeitos visuais, agendamento de processador, uso de memória e memória virtual</div>
          <div className="mt-auto mb-[11px] mr-[9px] self-end"><WinBtn text="Configurações..." w="w-[92px]" /></div>
        </Box>
        <Box title="Perfis de Usuário" cls="ml-[14px] mt-[13px] w-[364px] h-[78px]">
          <div className="ml-[9px] mt-[7px] w-[340px] leading-[13px] tracking-[-0.23px]">Configurações da área de trabalho relativas ao seu logon</div>
          <div className="mt-auto mb-[11px] mr-[9px] self-end"><WinBtn text="Configurações..." w="w-[92px]" /></div>
        </Box>
        <Box title="Inicialização e Recuperação" cls="ml-[14px] mt-[15px] w-[364px] h-[79px]">
          <div className="ml-[9px] mt-[7px] w-[340px] leading-[13px] tracking-[-0.23px]">Informações sobre inicialização do sistema, falha do sistema e depuração</div>
          <div className="mt-auto mb-[11px] mr-[9px] self-end"><WinBtn text="Configurações..." w="w-[92px]" /></div>
        </Box>
        <div className="mt-[14px] mr-[11px] self-end"><WinBtn text="Variáveis de Ambiente..." w="w-[126px]" /></div>
      </div>
      <div className="mt-[9px] mr-[8px] flex justify-end gap-[8px]">
        <WinBtn text="OK" w="w-[73px]" />
        <WinBtn text="Cancelar" w="w-[73px]" />
        <WinBtn text="Aplicar" w="w-[73px]" disabled />
      </div>
    </div>
  </div>
);

const ListHead = () => (
  <div className="h-[24px] shrink-0 flex pt-[2px] text-[11px] text-[#333] bg-gradient-to-b from-white via-white to-[#f2f2f2] border-b border-[#e5e5e5]">
    <div className="w-[100px] pl-[7px] flex items-center border-r border-[#e5e5e5]">Variável</div>
    <div className="w-[216px] pl-[6px] flex items-center border-r border-[#e5e5e5]">Valor</div>
    <div className="flex-1" />
  </div>
);

const Row = ({ a, b, sel, tight }: { a: string; b: string; sel?: boolean; tight?: boolean }) => (
  <div className={"h-[17px] w-[311px] shrink-0 flex items-center text-[11px] text-[#111] whitespace-nowrap " + (sel ? "bg-[#f0f0f0] ml-[5px]" : "ml-[5px]")}>
    <div className="w-[99px] pl-[2px]">{a}</div>
    <div className={"flex-1 pl-[1px] " + (tight ? "tracking-[-0.25px]" : "")}>{b}</div>
  </div>
);

const EnvVars = () => (
  <div className="absolute left-[534px] top-[431px] w-[393px] h-[434px] rounded-[6px] border border-[#1f3a1f] bg-[linear-gradient(180deg,#c4e9c0_0,#c4e9c0_29%,#3ba83b_31%,#3ba83b_100%)] shadow-[0_3px_14px_rgba(0,0,0,0.6)] flex flex-col [font-family:'Liberation_Sans',sans-serif] overflow-hidden">
    <div className="h-[27px] shrink-0 flex items-center pl-[6px] text-[12px] text-[#111] bg-[linear-gradient(90deg,#b8e4b3_0,#c6ebc2_25%,#3aa83a_50%,#7fd077_80%,#94d98c_100%)] relative">
      <span className="-mt-[2px]">Variáveis de Ambiente</span>
      <div className="absolute right-[6px] -top-px w-[47px] h-[20px] rounded-b-[3px] border border-t-0 border-[#7a3a2a] bg-[linear-gradient(180deg,#e9a08a_0,#d9714f_45%,#bd3a13_55%,#d26a3c_100%)] flex items-center justify-center">
        <svg width="11" height="10" viewBox="0 0 11 10" stroke="#fff" strokeWidth="2.4"><path d="M1 1l9 8M10 1L1 9" /></svg>
      </div>
    </div>
    <div className="mx-[5px] w-[381px] h-[400px] border border-[#2f5f2f] bg-[#f0f0f0] flex flex-col text-[11px] text-[#111]">
      <Box title="Variáveis de usuário para EDNA" bg="bg-[#f0f0f0]" cls="ml-[12px] mt-[27px] w-[356px] h-[156px]">
        <div className="mx-[8px] mt-[7px] w-[336px] h-[94px] border border-[#828790] bg-white flex flex-col shrink-0">
          <ListHead />
          <div className="pt-[1px]">
            <Row a="MOZ_PLUGIN_P..." b="C:\Program Files (x86)\Foxit Software\..." />
            <Row tight a="TEMP" b="%USERPROFILE%\AppData\Local\Temp" />
            <Row tight a="TMP" b="%USERPROFILE%\AppData\Local\Temp" />
          </div>
        </div>
        <div className="mt-[12px] mr-[11px] flex justify-end gap-[8px]">
          <WinBtn text="Novo..." w="w-[73px]" />
          <WinBtn text="Editar..." w="w-[73px]" disabled />
          <WinBtn text="Excluir" w="w-[73px]" disabled />
        </div>
      </Box>
      <Box title="Variáveis do sistema" bg="bg-[#f0f0f0]" cls="ml-[12px] mt-[13px] w-[356px] h-[156px]">
        <div className="mx-[8px] mt-[7px] w-[336px] h-[93px] border border-[#828790] bg-white flex flex-col shrink-0 overflow-hidden relative">
          <ListHead />
          <div className="pt-[1px]">
            <Row sel a="ComSpec" b="C:\Windows\system32\cmd.exe" />
            <Row a="FP_NO_HOST_C..." b="NO" />
            <Row a="globo" b="C:\Program Files\Java\jdk1.8.0_202" />
            <Row a="NUMBER_OF_P..." b="4" />
          </div>
          <div className="absolute right-0 top-0 bottom-0 w-[17px] bg-[#f3f3f3] flex flex-col items-center pt-[8px]">
            <Caret className="rotate-180 border-x-[4px] border-t-[4px]" c="border-t-[#555]" />
            <span className="mt-[5px] w-[14px] h-[15px] border border-[#9a9a9a] rounded-[2px] bg-gradient-to-r from-[#f5f5f5] to-[#cfcfcf]" />
            <Caret className="mt-auto mb-[7px] border-x-[4px] border-t-[4px]" c="border-t-[#555]" />
          </div>
        </div>
        <div className="mt-[13px] mr-[11px] flex justify-end gap-[8px]">
          <WinBtn text="Novo..." w="w-[73px]" />
          <WinBtn text="Editar..." w="w-[73px]" />
          <WinBtn text="Excluir" w="w-[73px]" />
        </div>
      </Box>
      <div className="mt-[14px] mr-[12px] flex justify-end gap-[8px]">
        <WinBtn text="OK" w="w-[73px]" def />
        <WinBtn text="Cancelar" w="w-[73px]" />
      </div>
    </div>
  </div>
);

export default function App() {
  return (
    <div className="relative w-[1920px] h-[1080px] overflow-hidden flex flex-col bg-white [font-family:'Liberation_Sans',sans-serif]">
      <TitleBar />
      <Tabs />
      <Ribbon />
      <FormulaBar />
      <Sheet />
      <SheetBar />
      <StatusBar />
      <Taskbar />
      <SysProps />
      <EnvVars />
    </div>
  );
}
